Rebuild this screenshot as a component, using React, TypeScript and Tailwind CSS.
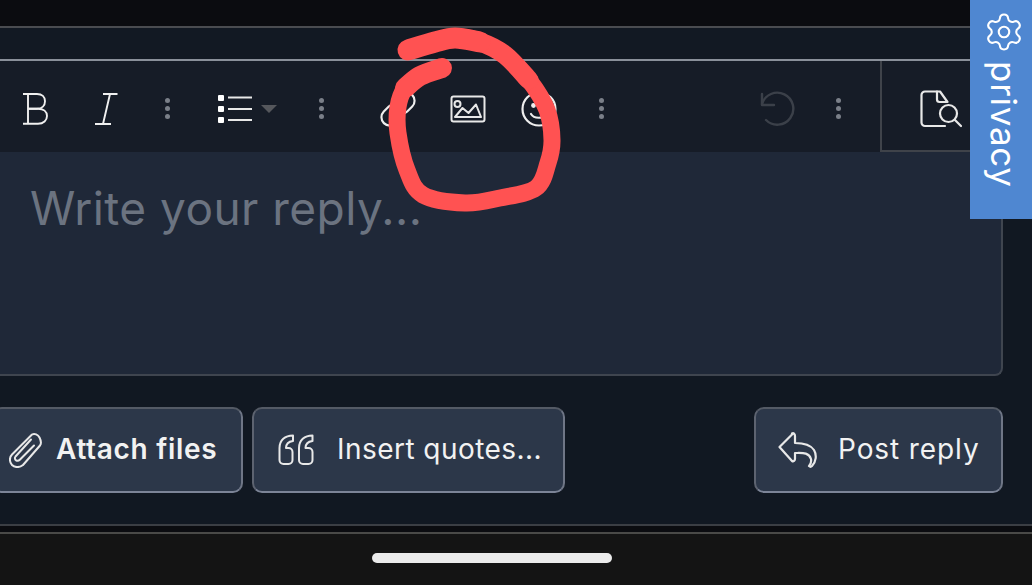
import type { ReactNode } from "react";
import { Settings } from "lucide-react";

const font = { fontFamily: '"Inter", "Noto Sans", sans-serif' };

function smooth(p: number[][]) {
  let d = `M${p[0][0]} ${p[0][1]}`;
  for (let i = 0; i < p.length - 1; i++) {
    const a = p[Math.max(i - 1, 0)];
    const b = p[i];
    const c = p[i + 1];
    const e = p[Math.min(i + 2, p.length - 1)];
    d += `C${b[0] + (c[0] - a[0]) / 6} ${b[1] + (c[1] - a[1]) / 6} ${c[0] - (e[0] - b[0]) / 6} ${c[1] - (e[1] - b[1]) / 6} ${c[0]} ${c[1]}`;
  }
  return d;
}

const ring = [
  [408, 50], [435, 42], [455, 38], [480, 42], [505, 55], [529, 80], [547, 110], [552, 140],
  [548, 163], [536, 188], [500, 198], [465, 203], [423, 195], [407, 170], [398, 133], [398, 107],
  [405, 88], [420, 76], [442, 68],
];

function Dots({ className }: { className: string }) {
  return (
    <div className={`flex w-[6px] shrink-0 flex-col gap-[3px] ${className}`}>
      <span className="h-[5px] w-[5px] rounded-full bg-[#7a7f88]" />
      <span className="h-[5px] w-[5px] rounded-full bg-[#7a7f88]" />
      <span className="h-[5px] w-[5px] rounded-full bg-[#7a7f88]" />
    </div>
  );
}

function BoldIcon() {
  return (
    <svg width="28" height="34" viewBox="0 0 28 34" fill="none" stroke="#f0f0f0" strokeWidth="1.900" className="ml-[22px] shrink-0">
      <path d="M1 2h14c5 0 8 3 8 7.300s-3 7.500-8 7.500H6" />
      <path d="M6 16.800h10c5.500 0 9 3 9 7.200s-3.500 7.800-9 7.800H1" />
      <path d="M6 2v30" />
    </svg>
  );
}

function ItalicIcon() {
  return (
    <svg width="24" height="34" viewBox="0 0 24 34" fill="none" stroke="#f0f0f0" strokeWidth="1.900" className="ml-[44px] shrink-0">
      <path d="M9 2h14.500M1 32h16M16 2 9 32" />
    </svg>
  );
}

function ListIcon() {
  return (
    <svg width="60" height="30" viewBox="0 0 60 30" className="ml-[47px] shrink-0">
      <rect x="0" y="1" width="6" height="6" rx="1" fill="#fff" />
      <rect x="0" y="12" width="6" height="6" rx="1" fill="#fff" />
      <rect x="0" y="23" width="6" height="6" rx="1" fill="#fff" />
      <path d="M10 3.500h24M10 15h24M10 26h24" stroke="#e8e8e8" strokeWidth="2" />
      <path d="M43 11h16l-8 8z" fill="#55575c" />
    </svg>
  );
}

function LinkIcon() {
  return (
    <svg width="40" height="40" viewBox="0 0 24 24" fill="none" stroke="#eee" strokeWidth="1.300" strokeLinecap="round" strokeLinejoin="round" className="ml-[53px] shrink-0">
      <path d="M10 13a5 5 0 0 0 7.540.54l3-3a5 5 0 0 0-7.070-7.070l-1.720 1.710" />
      <path d="M14 11a5 5 0 0 0-7.540-.54l-3 3a5 5 0 0 0 7.070 7.070l1.710-1.710" />
    </svg>
  );
}

function ImageIcon() {
  return (
    <svg width="36" height="28" viewBox="0 0 36 28" fill="none" stroke="#e8e8e8" strokeWidth="2" strokeLinejoin="round" className="ml-[32px] shrink-0">
      <rect x="1.500" y="1.500" width="33" height="25" rx="2" />
      <circle cx="7.500" cy="9" r="3" />
      <path d="M5 22 12.500 13l6 5 7.500-8.500 5 12.500z" />
    </svg>
  );
}

function SmileIcon() {
  return (
    <svg width="36" height="36" viewBox="0 0 36 36" fill="none" stroke="#eee" strokeWidth="2.200" strokeLinecap="round" className="ml-[35px] shrink-0">
      <circle cx="18" cy="18" r="16.500" />
      <circle cx="12.500" cy="14.500" r="2.400" fill="#eee" stroke="none" />
      <circle cx="24" cy="14.500" r="2.400" fill="#eee" stroke="none" />
      <path d="M10 23c3 5 12 5 16 0" />
    </svg>
  );
}

function UndoIcon() {
  return (
    <svg width="36" height="36" viewBox="0 0 36 36" fill="none" stroke="#3b4049" strokeWidth="2.400" strokeLinecap="round" strokeLinejoin="round" className="ml-[155px] shrink-0">
      <path d="M2 13A16 16 0 1 1 6 29" />
      <path d="M2 3v11h12" />
    </svg>
  );
}

function PreviewIcon() {
  return (
    <svg width="42" height="38" viewBox="0 0 42 38" fill="none" stroke="#e8e8e8" strokeWidth="2.200" strokeLinecap="round" strokeLinejoin="round" className="ml-[38px] shrink-0">
      <path d="M17 1.500H5a3.500 3.500 0 0 0-3.500 3.500v27.500A3.500 3.500 0 0 0 5 36h20" />
      <path d="M17 1.500v8a2.500 2.500 0 0 0 2.500 2.500H27.500L20 1.500z" />
      <circle cx="28.500" cy="23.500" r="8.500" />
      <path d="M35 30l6 6" />
    </svg>
  );
}

function ClipIcon() {
  return (
    <svg width="36" height="36" viewBox="0 0 36 36" fill="none" stroke="#e8e8e8" strokeWidth="2" strokeLinecap="round" strokeLinejoin="round" className="shrink-0">
      <path d="M14 33 31 13.500c1.500-2 1-5-.5-8s-5-4.500-7.500-3L3 22.500c-3 3-2.500 8 0 10.500s7 3 11 0" />
      <path d="M22 7.500 6.500 24.500c-1.200 1.500-.5 3.500.8 4 1.200.5 2.500.2 3.500-.8L25 13.500" />
    </svg>
  );
}

function QuoteIcon() {
  return (
    <svg width="36" height="32" viewBox="0 0 36 32" fill="none" stroke="#e8e8e8" strokeWidth="2" strokeLinejoin="round" className="shrink-0">
      <path d="M15 1.500C7 1.500 1.500 6 1.500 14v12a4 4 0 0 0 4 4h5a4 4 0 0 0 4-4v-8a4 4 0 0 0-4-4H8c0-4 3-6.500 7-7z" />
      <path d="M34.500 1.500c-8 0-13.500 4.500-13.500 12.500v12a4 4 0 0 0 4 4h5.500a4 4 0 0 0 4-4v-8a4 4 0 0 0-4-4H27.500c0-4 3-6.500 7-7z" />
    </svg>
  );
}

function ReplyIcon() {
  return (
    <svg width="40" height="36" viewBox="0 0 40 36" fill="none" stroke="#e8e8e8" strokeWidth="2.200" strokeLinejoin="round" strokeLinecap="round" className="shrink-0">
      <path d="M15 1.500 1.500 15 14 29c1.500 1 3-.5 3-2v-6c7 0 14-1 16 6 .5 3-.5 5.500-2 7 1 1 2 1 3 0 4-4 5-11 2-16-4-6-11-7-19-7V4c0-2-1.500-3.500-3-2.500z" />
    </svg>
  );
}

function Button({ className, children }: { className: string; children: ReactNode }) {
  return (
    <div
      className={`flex h-[86px] shrink-0 items-center rounded-[10px] border-2 border-t-[#545a65] border-r-[#6f7686] border-b-[#7c8497] border-l-[#5d6370] bg-[#2c3749] text-[28px] text-[#f2f2f2] ${className}`}
    >
      {children}
    </div>
  );
}

export default function App() {
  return (
    <div className="relative flex h-[585px] w-[1032px] flex-col overflow-hidden bg-[#0b0c10]" style={font}>
      <div className="h-[26px] shrink-0" />
      <div className="h-[35px] shrink-0 border-t-2 border-b-2 border-t-[#4a4c50] border-b-[#8a909a] bg-[#121923]" />

      <div className="flex h-[91px] shrink-0 items-stretch bg-[#161c27] pr-[30px]">
        <div className="flex items-center pt-[4px]">
          <BoldIcon />
          <ItalicIcon />
          <Dots className="ml-[47px]" />
          <ListIcon />
          <Dots className="ml-[41px]" />
          <LinkIcon />
          <ImageIcon />
          <SmileIcon />
          <Dots className="ml-[42px]" />
          <UndoIcon />
          <Dots className="ml-[40px]" />
        </div>
        <div className="ml-[38px] flex flex-1 items-center border-b-2 border-l-2 border-[#3f434a] pt-[6px]">
          <PreviewIcon />
        </div>
      </div>

      <div className="flex-1 bg-[#111822]">
        <div className="flex h-[224px] w-[1003px] rounded-br-[8px] border-r-2 border-b-2 border-[#3f454f] bg-[#1f2838] pt-[26px] pl-[30px]">
          <span className="text-[46px] leading-[60px] tracking-[0.45px] text-[#6b7380]">Write your reply...</span>
        </div>

        <div className="mt-[31px] flex w-[1003px] items-center">
          <Button className="ml-[-8px] w-[251px] gap-[11px] pl-[15px] font-semibold">
            <ClipIcon />
            <span className="mb-[2px] tracking-[0.7px]">Attach files</span>
          </Button>
          <Button className="ml-[9px] w-[313px] gap-[23px] pl-[24px]">
            <QuoteIcon />
            <span className="mb-[2px] tracking-[0.45px]">Insert quotes...</span>
          </Button>
          <Button className="ml-auto w-[249px] gap-[20px] pl-[22px]">
            <ReplyIcon />
            <span className="mb-[2px] tracking-[0.9px]">Post reply</span>
          </Button>
        </div>
      </div>

      <div className="h-[2px] shrink-0 bg-[#3b3e44]" />
      <div className="h-[6px] shrink-0" />
      <div className="flex h-[53px] shrink-0 border-t-2 border-[#4a4a48] bg-[#141414] pt-[19px] pl-[372px]">
        <div className="h-[10px] w-[240px] rounded-full bg-[#ebebeb]" />
      </div>

      <div className="absolute top-0 right-0 flex h-[219px] w-[62px] flex-col items-center bg-[#4f87d1] pt-[11px] pl-[6px] text-white">
        <Settings size={42} strokeWidth={1.200} />
        <span className="mt-[8px] text-[35px] leading-[38px] tracking-[0.7px] [writing-mode:vertical-rl]">privacy</span>
      </div>

      <svg width="1032" height="585" viewBox="0 0 1032 585" fill="none" className="pointer-events-none absolute top-0 left-0">
        <path d={smooth(ring)} stroke="#ff5252" strokeWidth="17" strokeLinecap="round" strokeLinejoin="round" />
        <path d={smooth(ring.slice(0, 6))} stroke="#ff5252" strokeWidth="19" strokeLinecap="round" strokeLinejoin="round" />
        <path d={smooth(ring.slice(0, 4))} stroke="#ff5252" strokeWidth="21" strokeLinecap="round" strokeLinejoin="round" />
        <path d={smooth(ring.slice(-3))} stroke="#ff5252" strokeWidth="20" strokeLinecap="round" strokeLinejoin="round" />
      </svg>
    </div>
  );
}
